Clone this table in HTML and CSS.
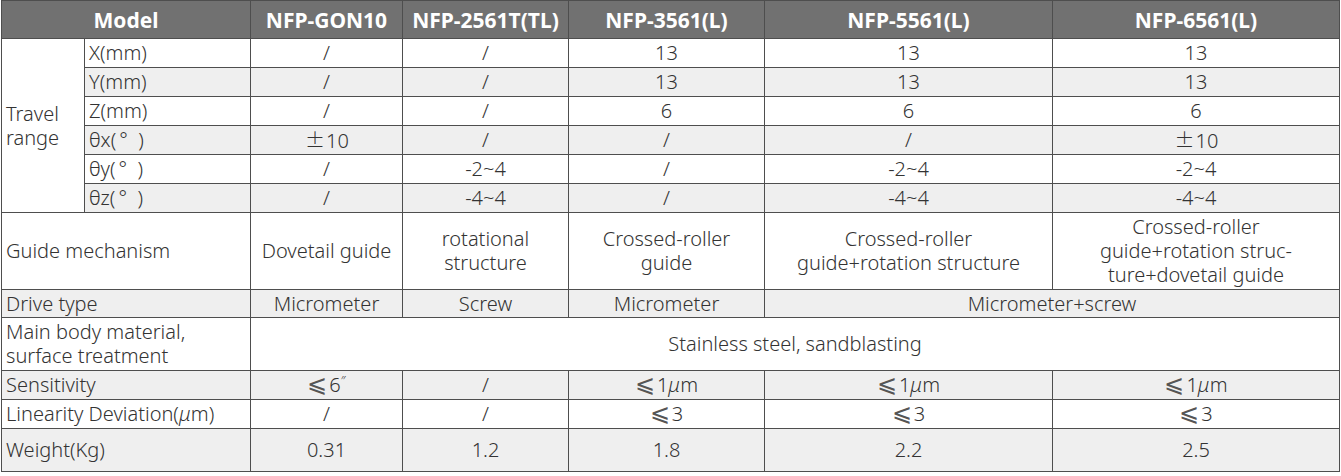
FILE: index.html
```html
<!DOCTYPE html>
<html>
<head>
<meta charset="utf-8">
<link rel="stylesheet" href="styles.css">
</head>
<body>
<table class="spec">
  <colgroup>
    <col class="c1"><col class="c2"><col class="c3"><col class="c4"><col class="c5"><col class="c6"><col class="c7">
  </colgroup>
  <thead>
    <tr class="head">
      <th colspan="2">Model</th>
      <th>NFP-GON10</th>
      <th>NFP-2561T(TL)</th>
      <th>NFP-3561(L)</th>
      <th>NFP-5561(L)</th>
      <th>NFP-6561(L)</th>
    </tr>
  </thead>
  <tbody>
    <tr class="r29">
      <td rowspan="6" class="lab white">Travel<br>range</td>
      <td class="lab">X(mm)</td><td>/</td><td>/</td><td>13</td><td>13</td><td>13</td>
    </tr>
    <tr class="r29 alt">
      <td class="lab">Y(mm)</td><td>/</td><td>/</td><td>13</td><td>13</td><td>13</td>
    </tr>
    <tr class="r29">
      <td class="lab">Z(mm)</td><td>/</td><td>/</td><td>6</td><td>6</td><td>6</td>
    </tr>
    <tr class="r29 alt">
      <td class="lab">θx(<span class="deg">°</span>)</td><td><span class="pm">±</span>10</td><td>/</td><td>/</td><td>/</td><td><span class="pm">±</span>10</td>
    </tr>
    <tr class="r29">
      <td class="lab">θy(<span class="deg">°</span>)</td><td>/</td><td>-2~4</td><td>/</td><td>-2~4</td><td>-2~4</td>
    </tr>
    <tr class="r29 alt">
      <td class="lab">θz(<span class="deg">°</span>)</td><td>/</td><td>-4~4</td><td>/</td><td>-4~4</td><td>-4~4</td>
    </tr>
    <tr class="r77">
      <td colspan="2" class="lab">Guide mechanism</td>
      <td>Dovetail guide</td>
      <td>rotational<br>structure</td>
      <td>Crossed-roller<br>guide</td>
      <td>Crossed-roller<br>guide+rotation structure</td>
      <td>Crossed-roller<br>guide+rotation struc-<br>ture+dovetail guide</td>
    </tr>
    <tr class="r28 alt">
      <td colspan="2" class="lab">Drive type</td>
      <td>Micrometer</td><td>Screw</td><td>Micrometer</td><td colspan="2">Micrometer+screw</td>
    </tr>
    <tr class="r53">
      <td colspan="2" class="lab">Main body material,<br>surface treatment</td>
      <td colspan="5">Stainless steel, sandblasting</td>
    </tr>
    <tr class="r29 alt">
      <td colspan="2" class="lab">Sensitivity</td>
      <td><span class="le">⩽</span>6<sup class="sec">″</sup></td><td>/</td><td><span class="le">⩽</span>1<i>μ</i>m</td><td><span class="le">⩽</span>1<i>μ</i>m</td><td><span class="le">⩽</span>1<i>μ</i>m</td>
    </tr>
    <tr class="r29">
      <td colspan="2" class="lab">Linearity Deviation(<i>μ</i>m)</td>
      <td>/</td><td>/</td><td><span class="le">⩽</span>3</td><td><span class="le">⩽</span>3</td><td><span class="le">⩽</span>3</td>
    </tr>
    <tr class="r43 alt">
      <td colspan="2" class="lab">Weight(Kg)</td>
      <td>0.31</td><td>1.2</td><td>1.8</td><td>2.2</td><td>2.5</td>
    </tr>
  </tbody>
</table>
</body>
</html>
```

FILE: styles.css
```css
html, body {
  margin: 0;
  padding: 0;
  background: #ffffff;
}

body {
  padding: 0 0 0 1px;
}

.spec {
  border-collapse: collapse;
  table-layout: fixed;
  width: 1338px;
  font-family: "Noto Sans", "Noto Sans CJK SC", sans-serif;
  font-size: 20px;
  font-weight: 300;
  color: #333333;
}

.c1 { width: 83px; }
.c2 { width: 166px; }
.c3 { width: 152px; }
.c4 { width: 166px; }
.c5 { width: 196px; }
.c6 { width: 288px; }
.c7 { width: 287px; }

.spec th,
.spec td {
  border: 1px solid #4e4e4e;
  padding: 0;
  text-align: center;
  vertical-align: middle;
  line-height: 24px;
  font-weight: 300;
}

.head th {
  background: #717171;
  color: #ffffff;
  font-weight: 700;
  font-size: 21px;
  height: 37px;
}

.spec td.lab {
  text-align: left;
  padding-left: 4px;
}

.alt td {
  background: #efefef;
}

.alt td.white,
td.white {
  background: #ffffff;
}

.r29 td { height: 28px; }
.r28 td { height: 27px; }
.r77 td { height: 76px; }
.r53 td { height: 52px; }
.r43 td { height: 42px; }

.deg {
  display: inline-block;
  width: 22px;
  padding-left: 3px;
  box-sizing: border-box;
  text-align: left;
}

.pm {
  font-family: "Noto Sans CJK SC", sans-serif;
  display: inline-block;
  width: 22px;
  text-align: center;
}

.le {
  font-family: "DejaVu Sans", sans-serif;
  font-weight: 200;
  font-size: 24px;
  line-height: 20px;
  color: #555555;
  display: inline-block;
  margin-right: 2px;
}

.sec {
  font-size: 13px;
  line-height: 0;
  vertical-align: 7px;
}

.spec i {
  font-style: italic;
}
```
